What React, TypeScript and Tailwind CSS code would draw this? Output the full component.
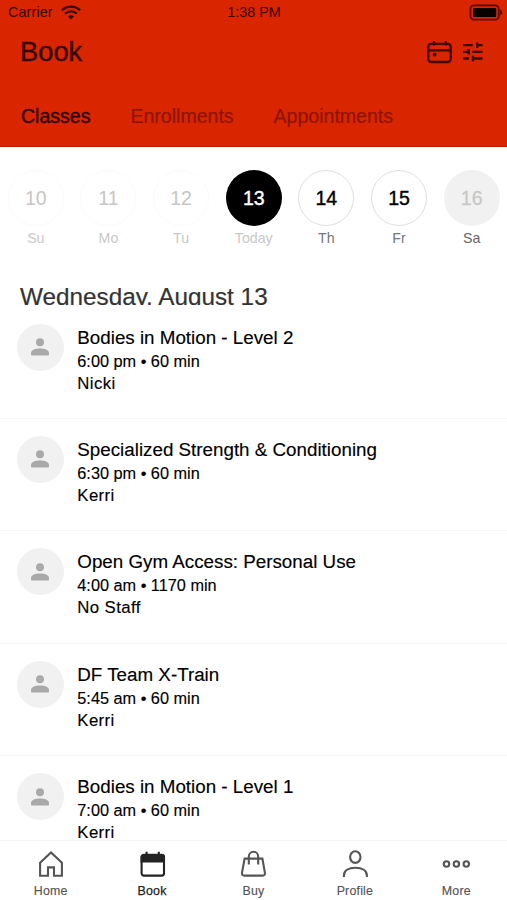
import { useState } from "react";
import type { ReactNode } from "react";
import clsx from "clsx";

interface Day {
	date: number;
	label: string;
	state: "past" | "today" | "open" | "closed";
}

interface ClassItem {
	title: string;
	time: string;
	staff: string;
}

const tabs = ["Classes", "Enrollments", "Appointments"];

const days: Day[] = [
	{ date: 10, label: "Su", state: "past" },
	{ date: 11, label: "Mo", state: "past" },
	{ date: 12, label: "Tu", state: "past" },
	{ date: 13, label: "Today", state: "today" },
	{ date: 14, label: "Th", state: "open" },
	{ date: 15, label: "Fr", state: "open" },
	{ date: 16, label: "Sa", state: "closed" },
];

const classes: ClassItem[] = [
	{ title: "Bodies in Motion - Level 2", time: "6:00 pm • 60 min", staff: "Nicki" },
	{ title: "Specialized Strength & Conditioning", time: "6:30 pm • 60 min", staff: "Kerri" },
	{ title: "Open Gym Access: Personal Use", time: "4:00 am • 1170 min", staff: "No Staff" },
	{ title: "DF Team X-Train", time: "5:45 am • 60 min", staff: "Kerri" },
	{ title: "Bodies in Motion - Level 1", time: "7:00 am • 60 min", staff: "Kerri" },
];

const circleStyles = {
	past: "border border-[#fbfbfb] text-[#c6c6c6]",
	today: "bg-black text-white [-webkit-text-stroke:0.4px_white]",
	open: "border border-[#dedede] text-black [-webkit-text-stroke:0.4px_black]",
	closed: "bg-[#f1f1f1] text-[#c8c8c8] [-webkit-text-stroke:0.3px_#c8c8c8]",
};

const labelStyles = {
	past: "text-[#c8c8c8]",
	today: "text-[#c8c8c8]",
	open: "text-[#777]",
	closed: "text-[#666]",
};

const StatusBar = () => (
	<div className="grid h-6 grid-cols-[1fr_auto_1fr] items-center pl-2 pr-[4px] text-[14.4px] leading-6 text-[#3a0600]">
		<div className="flex items-center gap-2">
			<span className="tracking-[0.1px]">Carrier</span>
			<svg width="20" height="15" viewBox="0 0 20 15" fill="none" stroke="#3a0600" strokeWidth="2.3">
				<path d="M.9 5.3a13 13 0 0 1 18.2 0" />
				<path d="M4.2 8.8a8.3 8.3 0 0 1 11.6 0" />
				<path d="M7 11.6a4.3 4.3 0 0 1 6 0L10 14.6z" fill="#3a0600" stroke="none" />
			</svg>
		</div>
		<span className="pr-[3px]">1:38 PM</span>
		<svg className="justify-self-end" width="34" height="17" viewBox="0 0 34 17">
			<rect x="1.4" y="1.3" width="28.4" height="14.4" rx="3.6" fill="none" stroke="#5a0a00" strokeWidth="1.7" />
			<rect x="4" y="3.9" width="23.2" height="9.2" rx="1" fill="#0a0000" />
			<path d="M31.2 5.5c1.3.6 2 1.6 2 3s-.7 2.4-2 3z" fill="#5a0a00" />
		</svg>
	</div>
);

const CalendarIcon = () => (
	<svg width="26" height="24" viewBox="0 0 26 24" fill="none" stroke="#420700" strokeWidth="2.3">
		<rect x="1.3" y="3.8" width="22.4" height="18.2" rx="3" />
		<path d="M1.3 10.3h22.4M7 1v4.6M18.8 1v4.6" />
		<circle cx="7.6" cy="14.6" r="1.9" fill="#420700" stroke="none" />
	</svg>
);

const FilterIcon = () => (
	<svg width="20" height="20" viewBox="0 0 20 20" fill="none" stroke="#420700" strokeWidth="2.3">
		<path d="M.3 3.2h9.4M13 3.2h6.5M14.2.4v5.6" />
		<path d="M.3 9.8h5.5M5.8 7v5.6M9.2 9.8h10.3" />
		<path d="M.3 16.5H6M9.6 16.5h9.9M10 13.7v5.6" />
	</svg>
);

const Avatar = () => (
	<div className="flex size-[47px] shrink-0 items-center justify-center rounded-full bg-[#f1f1f1]">
		<svg className="mr-px" width="18" height="18" viewBox="0 0 18 18" fill="#a9a9a9">
			<circle cx="9" cy="4.3" r="4" />
			<path d="M0 15.2c0-3.4 4.5-4.7 9-4.7s9 1.3 9 4.7v1.1q0 1.2-1.2 1.2H1.2Q0 17.500 0 16.3z" />
		</svg>
	</div>
);

const ClassRow = ({ item }: { item: ClassItem }) => (
	<li className="flex h-[112.4px] gap-[13.3px] border-b border-[#f5f5f5] pl-[17px] pt-[17px]">
		<Avatar />
		<div className="text-black [-webkit-text-stroke:0.15px_black]">
			<p className="pt-px text-[18.8px] leading-[25px]">{item.title}</p>
			<p className="text-[16.3px] leading-[22px]">{item.time}</p>
			<p className="text-[16.8px] leading-[23px] tracking-[0.4px]">{item.staff}</p>
		</div>
	</li>
);

const navItems: { name: string; icon: ReactNode }[] = [
	{
		name: "Home",
		icon: <path d="M3.1 12.7 14 2.4l10.9 10.3v13H17v-8.3h-6v8.3H3.1z" />,
	},
	{
		name: "Book",
		icon: (
			<>
				<rect x="3.6" y="4.8" width="22.4" height="20.8" rx="2.3" />
				<path d="M2.6 7q0-2.6 2.4-2.6h19.6q2.4 0 2.4 2.6v5.4H2.6z" fill="currentColor" stroke="none" />
				<path d="M8.6 1.8v4M20.8 1.8v4" />
			</>
		),
	},
	{
		name: "Buy",
		icon: (
			<>
				<path d="M5.6 8.6h17.8l2.5 14.3q.3 2.7-2.3 2.7H5.3q-2.6 0-2.3-2.7z" />
				<path d="M9.8 14.6V6.7a4.7 5 0 0 1 9.4 0v7.9" />
			</>
		),
	},
	{
		name: "Profile",
		icon: (
			<>
				<ellipse cx="14.3" cy="7.1" rx="5.2" ry="5.8" />
				<path d="M2.9 27v-1.6c0-4.6 4.5-7.6 11.5-7.6s11.500 3 11.500 7.6V27" />
			</>
		),
	},
	{
		name: "More",
		icon: (
			<>
				<circle cx="4.5" cy="14" r="2.7" />
				<circle cx="14.4" cy="14" r="2.7" />
				<circle cx="24.3" cy="14" r="2.7" />
			</>
		),
	},
];

const App = () => {
	const [activeTab, setActiveTab] = useState("Classes");
	const [activePage, setActivePage] = useState("Book");

	return (
		<div className="flex h-[900px] w-[507px] flex-col overflow-hidden bg-white font-['Liberation_Sans',Arial,sans-serif]">
			<header className="h-[147px] shrink-0 border-b border-[#b82000] bg-[#d92500]">
				<StatusBar />
				<div className="flex h-[56px] items-center justify-between pl-[20px] pr-6">
					<h1 className="text-[27.3px] leading-[56px] text-[#300500] [-webkit-text-stroke:0.3px_#300500]">Book</h1>
					<div className="flex items-center gap-[10px]">
						<CalendarIcon />
						<FilterIcon />
					</div>
				</div>
				<div className="flex gap-10 pl-[21px] pt-[22px] text-[19.55px] leading-7">
					{tabs.map((tab) => (
						<button
							key={tab}
							type="button"
							onClick={() => setActiveTab(tab)}
							className={clsx(
								tab === activeTab
									? "text-[#300500] [-webkit-text-stroke:0.4px_#300500]"
									: "text-[#8c1400] [-webkit-text-stroke:0.15px_#8c1400]"
							)}
						>
							{tab}
						</button>
					))}
				</div>
			</header>

			<div className="-mx-px grid h-[126px] shrink-0 grid-cols-7 pl-[0.5px] pt-[23px]">
				{days.map((day) => (
					<div key={day.date} className="flex flex-col items-center">
						<div
							className={clsx(
								"flex size-[56px] items-center justify-center rounded-full pt-px text-[19.5px]",
								circleStyles[day.state]
							)}
						>
							{day.date}
						</div>
						<span className={clsx("pt-[2px] text-[14.2px] leading-5", labelStyles[day.state])}>
							{day.label}
						</span>
					</div>
				))}
			</div>

			<main className="min-h-0 flex-1 overflow-hidden">
				{/* the heading box is shorter than its text, so descenders are cut off */}
				<h2 className="h-[32px] overflow-hidden pl-5 text-[24.3px] leading-[47px] text-[#333] [-webkit-text-stroke:0.2px_#333]">
					Wednesday, August 13
				</h2>
				<ul className="pt-[1.5px]">
					{classes.map((item) => (
						<ClassRow key={item.title} item={item} />
					))}
				</ul>
			</main>

			<nav className="grid h-[60px] shrink-0 grid-cols-5 border-t border-[#f3f3f3] bg-white">
				{navItems.map(({ name, icon }) => (
					<button
						key={name}
						type="button"
						onClick={() => setActivePage(name)}
						className={clsx(
							"flex flex-col items-center pt-[9px]",
							name === activePage
								? "text-[#222] [-webkit-text-stroke:0.25px_#222]"
								: "text-[#555] [-webkit-text-stroke:0.15px_#555]"
						)}
					>
						<svg width="28" height="28" viewBox="0 0 28 28" fill="none" stroke="currentColor" strokeWidth="2.1">
							{icon}
						</svg>
						<span className="pt-[5px] text-[12.4px] leading-4 tracking-[0.2px]">{name}</span>
					</button>
				))}
			</nav>
		</div>
	);
};

export default App;
